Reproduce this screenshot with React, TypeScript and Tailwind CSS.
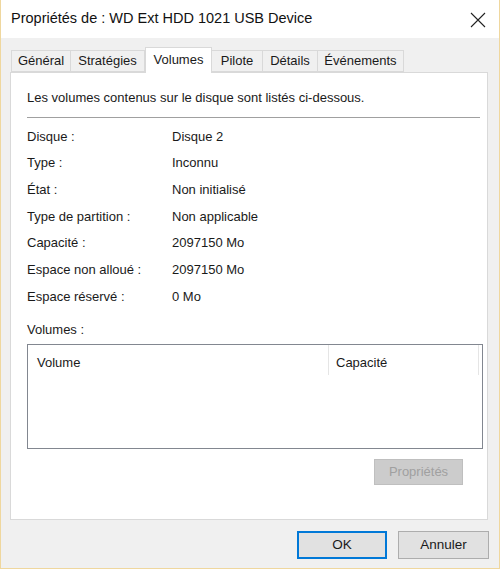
import React from "react";

const font = { fontFamily: '"Liberation Sans", Arial, sans-serif' };

const tabs = [
  { label: "Général", w: "w-[60px]" },
  { label: "Stratégies", w: "w-[74px]" },
  { label: "Volumes", w: "w-[67px]", active: true },
  { label: "Pilote", w: "w-[51px]" },
  { label: "Détails", w: "w-[55px]" },
  { label: "Événements", w: "w-[86px]" },
];

const rows = [
  ["Disque :", "Disque 2"],
  ["Type :", "Inconnu"],
  ["État :", "Non initialisé"],
  ["Type de partition :", "Non applicable"],
  ["Capacité :", "2097150 Mo"],
  ["Espace non alloué :", "2097150 Mo"],
  ["Espace réservé :", "0 Mo"],
];

export default function App() {
  return (
    <div
      className="w-[500px] h-[569px] flex flex-col border-x border-b border-[#efd79e] text-[13px] text-[#1a1a1a] bg-[#f0f0f0]"
      style={font}
    >
      {/* title bar */}
      <div className="h-[38px] bg-white flex items-center justify-between pl-[10px] pr-[13px]">
        <span className="text-[14.5px] text-[#111]">Propriétés de : WD Ext HDD 1021 USB Device</span>
        <svg width="16" height="16" viewBox="0 0 16 16" className="mt-[2px]">
          <path d="M1 1 L15 15 M15 1 L1 15" stroke="#222" strokeWidth="1.1" fill="none" />
        </svg>
      </div>

      <div className="flex-1 flex flex-col pl-[9px] pr-[11px] pt-[10px]">
        {/* tabs */}
        <div className="flex items-end h-[24px] pl-[1px] relative z-10">
          {tabs.map((t) =>
            t.active ? (
              <div
                key={t.label}
                className={`${t.w} h-[26px] -mb-px bg-white border border-b-0 border-[#d9d9d9] flex items-center justify-center pb-[2px]`}
              >
                {t.label}
              </div>
            ) : (
              <div
                key={t.label}
                className={`${t.w} h-[22px] bg-[#f0f0f0] border border-[#d9d9d9] border-l-0 first:border-l flex items-center justify-center whitespace-nowrap`}
              >
                {t.label}
              </div>
            )
          )}
        </div>

        {/* panel */}
        <div className="h-[448px] bg-white border border-[#d9d9d9] flex flex-col pl-[16px] pr-[4px]">
          <div className="h-[44px] flex items-center pt-[6px]">
            Les volumes contenus sur le disque sont listés ci-dessous.
          </div>
          <div className="h-px bg-[#a0a0a0] mr-[3px]" />
          <div className="pt-[5px] flex flex-col">
            {rows.map(([k, v]) => (
              <div key={k} className="h-[26.7px] flex items-center">
                <span className="w-[145px]">{k}</span>
                <span>{v}</span>
              </div>
            ))}
          </div>
          <div className="h-[28px] flex items-end pb-[2px] mt-[4px]">Volumes :</div>
          <div className="h-[105px] border border-[#828790] mt-[2px] bg-white">
            <div className="h-[30px] flex">
              <div className="w-[301px] pl-[9px] pt-[5px] flex items-center border-r border-[#e5e5e5]">Volume</div>
              <div className="w-[150px] pl-[7px] pt-[5px] flex items-center border-r border-[#e5e5e5]">Capacité</div>
            </div>
          </div>
          <div className="flex justify-end pr-[20px] mt-[10px]">
            <div className="w-[89px] h-[26px] bg-[#cccccc] border border-[#bfbfbf] text-[#a0a0a0] flex items-center justify-center">
              Propriétés
            </div>
          </div>
        </div>

        {/* buttons */}
        <div className="flex justify-end gap-[11px] pt-[11px] -mr-[1px]">
          <div className="w-[90px] h-[28px] bg-[#e1e1e1] border-2 border-[#0078d7] flex items-center justify-center text-[13.5px]">
            OK
          </div>
          <div className="w-[91px] h-[28px] bg-[#e1e1e1] border border-[#adadad] flex items-center justify-center text-[13.5px]">
            Annuler
          </div>
        </div>
      </div>
    </div>
  );
}
